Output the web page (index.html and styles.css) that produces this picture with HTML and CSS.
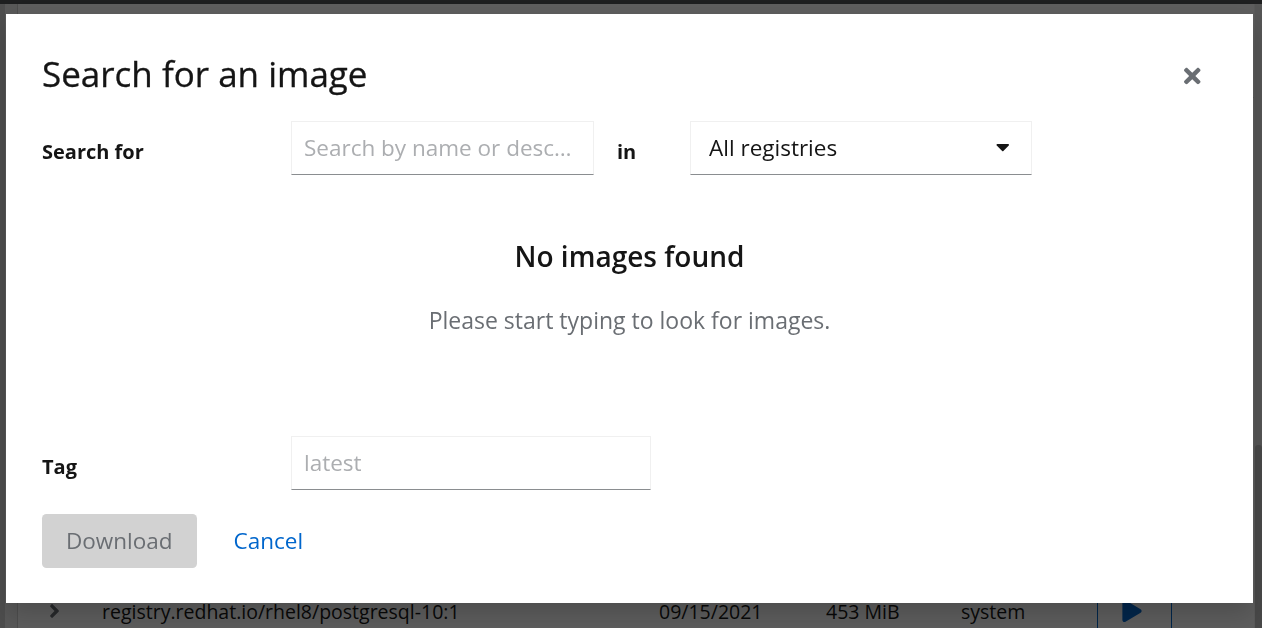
FILE: index.html
```html
<!DOCTYPE html>
<html lang="en">
<head>
<meta charset="utf-8">
<title>Search for an image</title>
<link rel="stylesheet" href="styles.css">
</head>
<body>
<div class="page">
  <div class="topbar"></div>
  <div class="main">
    <div class="nav"></div>
    <div class="gutter"></div>
    <div class="card">
      <div class="toolbar"></div>
      <div class="spacer"></div>
      <div class="table-row">
        <span class="toggle">
          <svg class="chevron" viewBox="0 0 256 512" width="11" height="22" aria-hidden="true"><path d="M224.3 273l-136 136c-9.4 9.4-24.6 9.4-33.9 0l-22.6-22.6c-9.4-9.4-9.4-24.6 0-33.9l96.4-96.4-96.4-96.4c-9.4-9.4-9.4-24.6 0-33.9L54.3 103c9.4-9.4 24.6-9.4 33.9 0l136 136c9.5 9.4 9.5 24.6.1 34z"/></svg>
        </span>
        <span class="cell">registry.redhat.io/rhel8/postgresql-10:1</span>
        <span class="cell">09/15/2021</span>
        <span class="cell">453 MiB</span>
        <span class="cell">system</span>
        <span class="cell action">
          <svg class="play" viewBox="0 0 448 512" width="20" height="22" aria-hidden="true"><path d="M424.4 214.7L72.4 6.6C43.8-10.3 0 6.1 0 47.9V464c0 37.5 40.7 60.1 72.4 41.3l352-208c31.4-18.5 31.5-64.1 0-82.6z"/></svg>
        </span>
        <span class="cell action"></span>
      </div>
    </div>
    <div class="scrollbar"><div class="thumb"></div></div>
  </div>
</div>

<div class="backdrop">
  <div class="modal" role="dialog" aria-labelledby="modal-title">
    <header class="modal-header">
      <h1 class="modal-title" id="modal-title">Search for an image</h1>
      <button class="close-btn" type="button" aria-label="Close">
        <svg viewBox="0 0 352 512" width="16.5" height="24" aria-hidden="true"><path d="M242.72 256l100.07-100.07c12.28-12.28 12.28-32.19 0-44.48l-22.24-22.24c-12.28-12.28-32.19-12.28-44.48 0L176 189.28 75.93 89.21c-12.28-12.28-32.19-12.28-44.48 0L9.21 111.45c-12.28 12.28-12.28 32.19 0 44.48L109.28 256 9.21 356.07c-12.28 12.28-12.28 32.19 0 44.48l22.24 22.24c12.28 12.28 32.2 12.28 44.48 0L176 322.72l100.07 100.07c12.28 12.28 32.2 12.28 44.48 0l22.24-22.24c12.28-12.28 12.28-32.19 0-44.48L242.72 256z"/></svg>
      </button>
    </header>

    <div class="modal-body">
      <div class="form-row">
        <label class="form-label" for="search-input">Search for</label>
        <div class="search-controls">
          <input class="text-input search-input" id="search-input" type="text" placeholder="Search by name or description">
          <span class="form-label in-label">in</span>
          <div class="select">
            <span class="select-text">All registries</span>
            <svg class="caret" viewBox="0 0 320 512" width="13.5" height="21.6" aria-hidden="true"><path d="M31.3 192h257.3c17.8 0 26.7 21.5 14.1 34.1L174.1 354.8c-7.8 7.8-20.5 7.8-28.3 0L17.2 226.1C4.6 213.5 13.5 192 31.3 192z"/></svg>
          </div>
        </div>
      </div>

      <div class="empty-state">
        <h2 class="empty-title">No images found</h2>
        <p class="empty-body">Please start typing to look for images.</p>
      </div>

      <div class="form-row">
        <label class="form-label" for="tag-input">Tag</label>
        <div class="tag-controls">
          <input class="text-input tag-input" id="tag-input" type="text" placeholder="latest">
        </div>
      </div>
    </div>

    <footer class="modal-footer">
      <button class="btn btn-primary" type="button" disabled>Download</button>
      <button class="btn btn-link" type="button">Cancel</button>
    </footer>
  </div>
</div>
</body>
</html>
```

FILE: styles.css
```css
* {
  box-sizing: border-box;
}

html,
body {
  margin: 0;
  padding: 0;
  height: 100%;
}

body {
  font-family: "Open Sans", "Liberation Sans", sans-serif;
  color: #151515;
  background: #ffffff;
  overflow: hidden;
}

/* ---------- page behind the modal ---------- */
.page {
  height: 635px;
  display: flex;
  flex-direction: column;
}

.topbar {
  height: 4px;
  background: #4f5255;
}

.main {
  flex: 1;
  display: flex;
}

.nav {
  width: 5px;
  background: #d2d2d2;
}

.gutter {
  width: 12px;
  background: #f0f0f0;
}

.card {
  flex: 1;
  display: flex;
  flex-direction: column;
  background: #ffffff;
  border-left: 1px solid #d2d2d2;
}

.toolbar {
  height: 94px;
  border-bottom: 1px solid #e4e4e4;
}

.spacer {
  flex: 1;
}

.table-row {
  height: 48px;
  display: grid;
  grid-template-columns: 84px 557px 167px 135px 136px 74px 1fr;
  align-items: center;
  font-size: 19.5px;
  color: #151515;
}

.toggle {
  padding-left: 31px;
  display: flex;
  align-items: center;
}

.chevron {
  fill: #6a6e73;
  display: block;
}

.cell {
  white-space: nowrap;
}

.action {
  height: 100%;
  border-left: 1px solid #0066cc;
  display: flex;
  align-items: center;
  padding-left: 24px;
}

.play {
  fill: #0066cc;
}

.scrollbar {
  width: 8px;
  background: #e8e8e8;
  border-left: 1px solid #f4f4f4;
  display: flex;
  flex-direction: column;
  justify-content: flex-end;
}

.thumb {
  height: 190px;
  background: #c4c4c4;
  border-radius: 3px 3px 0 0;
}

/* ---------- backdrop and modal ---------- */
.backdrop {
  position: fixed;
  inset: 0;
  background: rgba(3, 3, 3, 0.64);
  padding: 14px 0 0 6px;
}

.modal {
  width: 1247px;
  background: #ffffff;
  padding: 37px 36px 35px 36px;
  box-shadow: 0 12px 24px rgba(3, 3, 3, 0.18);
}

.modal-header {
  display: flex;
  align-items: center;
  justify-content: space-between;
}

.modal-title {
  margin: 0;
  font-size: 35px;
  line-height: 45.5px;
  font-weight: 400;
  color: #151515;
  -webkit-text-stroke: 0.3px #151515;
}

.close-btn {
  width: 49px;
  height: 40px;
  margin-top: 4px;
  padding: 0;
  border: 0;
  background: transparent;
  display: flex;
  align-items: center;
  justify-content: center;
  cursor: pointer;
}

.close-btn svg {
  fill: #6a6e73;
  display: block;
}

.modal-body {
  padding-top: 24.5px;
}

.form-row {
  display: grid;
  grid-template-columns: 249px 1fr;
  align-items: start;
}

.form-label {
  padding-top: 16px;
  font-size: 20px;
  line-height: 30px;
  font-weight: 700;
  color: #151515;
}

.search-controls {
  display: flex;
  align-items: flex-start;
}

.text-input {
  height: 54px;
  font-family: inherit;
  font-size: 22.5px;
  color: #151515;
  background: #ffffff;
  border: 1px solid #f0f0f0;
  border-bottom-color: #8a8d90;
  border-radius: 0;
  padding: 0 20px 2px 12px;
  outline: none;
  text-overflow: ellipsis;
}

.text-input::placeholder {
  color: #acaeb1;
  opacity: 1;
}

.search-input {
  width: 303px;
}

.in-label {
  width: 96px;
  padding-left: 23px;
}

.select {
  width: 342px;
  height: 54px;
  display: flex;
  align-items: center;
  justify-content: space-between;
  padding: 0 22px 2px 18px;
  border: 1px solid #f0f0f0;
  border-bottom-color: #8a8d90;
  font-size: 22.5px;
  color: #151515;
}

.caret {
  fill: #151515;
  display: block;
}

.empty-state {
  height: 261px;
  padding-top: 63px;
  text-align: center;
}

.empty-title {
  margin: 0;
  font-size: 28px;
  line-height: 36px;
  font-weight: 600;
  color: #151515;
}

.empty-body {
  margin: 30px 0 0;
  font-size: 23px;
  line-height: 33.75px;
  color: #6a6e73;
}

.tag-input {
  width: 360px;
}

.modal-footer {
  margin-top: 24px;
  display: flex;
  align-items: center;
  gap: 13px;
}

.btn {
  height: 54px;
  padding: 0 24px 1px;
  border: 0;
  border-radius: 4.5px;
  font-family: inherit;
  font-size: 22.5px;
  line-height: 33.75px;
  background: transparent;
}

.btn-primary {
  background: #d2d2d2;
  color: #6a6e73;
}

.btn-link {
  color: #0066cc;
  cursor: pointer;
}
```
